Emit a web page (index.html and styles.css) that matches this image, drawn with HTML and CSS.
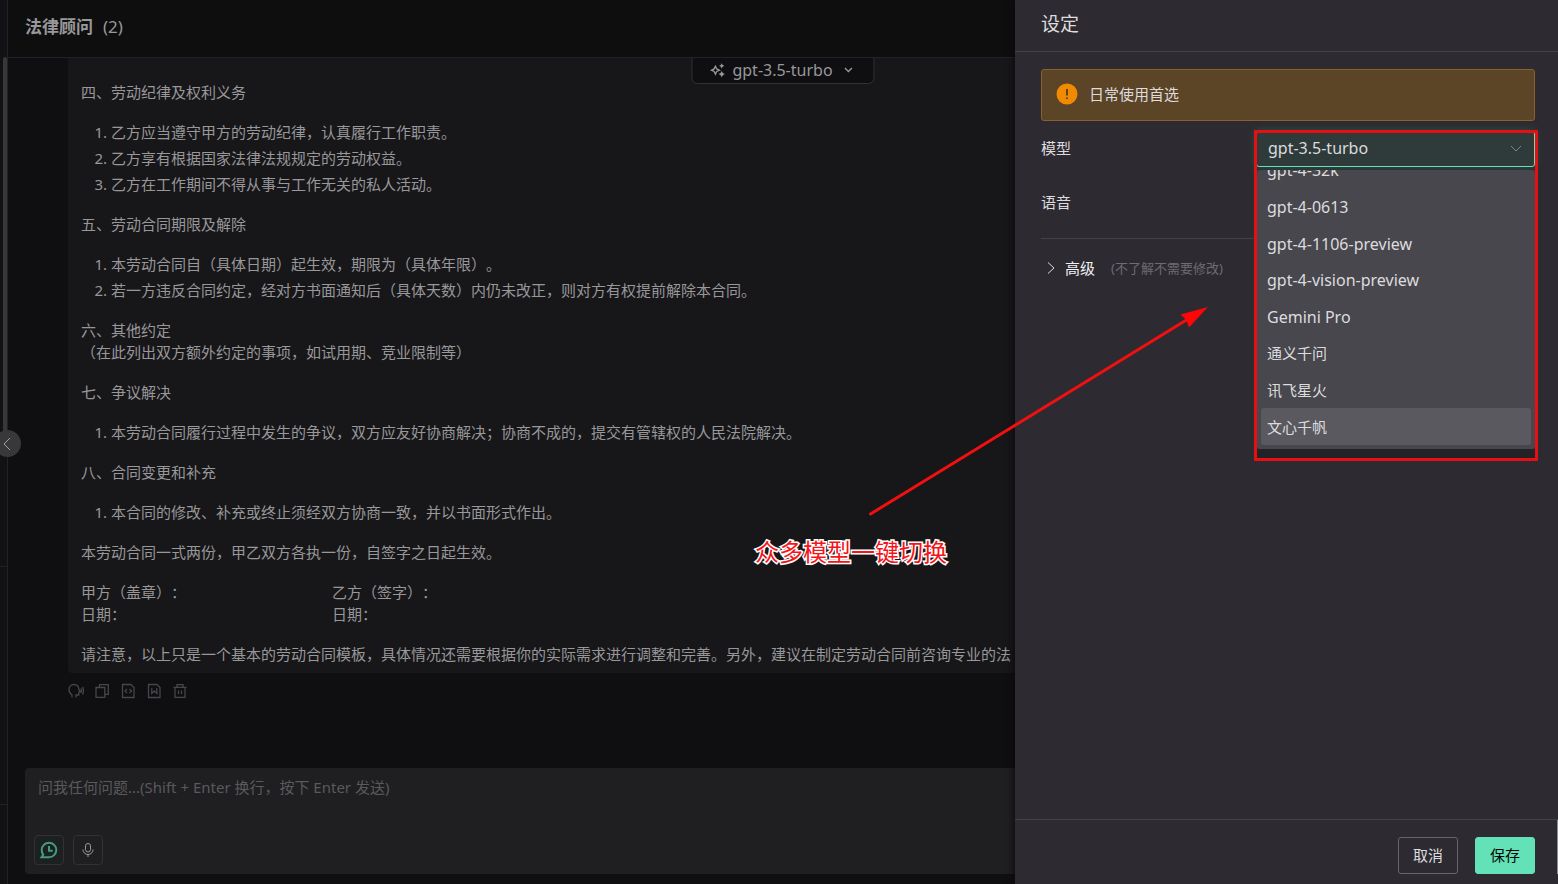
FILE: index.html
```html
<!DOCTYPE html>
<html lang="zh-CN">
<head>
<meta charset="utf-8">
<title>法律顾问</title>
<link rel="stylesheet" href="styles.css">
</head>
<body>
<div class="app">
  <aside class="sidebar">
    <div class="sidebar-list"><div class="sidebar-thumb"></div></div>
    <div class="sidebar-user"></div>
    <div class="sidebar-foot"></div>
    <button class="collapse" type="button" aria-label="收起">
      <svg width="14" height="16" viewBox="0 0 14 16"><path d="M9 2 3 8l6 6"/></svg>
    </button>
  </aside>

  <main class="chat">
    <header class="chat-header">
      <h1 class="chat-title">法律顾问</h1>
      <span class="chat-count">(2)</span>
    </header>

    <section class="messages">
      <button class="model-pill" type="button">
        <svg class="icon" width="16" height="16" viewBox="0 0 16 16"><path d="M6 4.200 7.300 6.900 10 8.200 7.300 9.500 6 12.200 4.700 9.500 2 8.200 4.700 6.900Z"/><path class="solid" d="m12.300 1.200.9 1.700 1.700.9-1.700.9-.9 1.700-.9-1.700-1.700-.9 1.700-.9ZM12.300 9l1.100 2 2 1.100-2 1.100-1.100 2-1.100-2-2-1.100 2-1.100Z"/></svg>
        <span>gpt-3.5-turbo</span>
        <svg class="icon" width="10" height="10" viewBox="0 0 10 10"><path d="m1.500 3 3.500 3.500L8.500 3"/></svg>
      </button>

      <article class="bubble">
        <p>四、劳动纪律及权利义务</p>
        <ol>
          <li>乙方应当遵守甲方的劳动纪律，认真履行工作职责。</li>
          <li>乙方享有根据国家法律法规规定的劳动权益。</li>
          <li>乙方在工作期间不得从事与工作无关的私人活动。</li>
        </ol>
        <p>五、劳动合同期限及解除</p>
        <ol>
          <li>本劳动合同自（具体日期）起生效，期限为（具体年限）。</li>
          <li>若一方违反合同约定，经对方书面通知后（具体天数）内仍未改正，则对方有权提前解除本合同。</li>
        </ol>
        <p>六、其他约定<br>（在此列出双方额外约定的事项，如试用期、竞业限制等）</p>
        <p>七、争议解决</p>
        <ol>
          <li>本劳动合同履行过程中发生的争议，双方应友好协商解决；协商不成的，提交有管辖权的人民法院解决。</li>
        </ol>
        <p>八、合同变更和补充</p>
        <ol>
          <li>本合同的修改、补充或终止须经双方协商一致，并以书面形式作出。</li>
        </ol>
        <p>本劳动合同一式两份，甲乙双方各执一份，自签字之日起生效。</p>
        <div class="signatures">
          <span>甲方（盖章）：</span><span>乙方（签字）：</span>
          <span>日期：</span><span>日期：</span>
        </div>
        <p>请注意，以上只是一个基本的劳动合同模板，具体情况还需要根据你的实际需求进行调整和完善。另外，建议在制定劳动合同前咨询专业的法</p>
      </article>

      <div class="actions">
        <button type="button" aria-label="朗读"><svg class="icon" width="16" height="16" viewBox="0 0 16 16"><path d="M4 14.500V12C2 10.500 1 9 1 6.500 1 3.500 3 1.500 6 1.500s4.800 2 4.800 4.500L12 8.500l-1.200.6V12H8v2.500M12.800 5.500c.8 1.500.8 3 0 4.500M14.500 4c1.200 2.500 1.200 5 0 7.500"/></svg></button>
        <button type="button" aria-label="复制"><svg class="icon" width="16" height="16" viewBox="0 0 16 16"><path d="M5.500 4.500V1.700h8.800v9.600H11M2 4.500h8.800v9.800H2Z"/></svg></button>
        <button type="button" aria-label="导出代码"><svg class="icon" width="16" height="16" viewBox="0 0 16 16"><path d="M2.500 1.500h8.500l3 3v10H2.500ZM7 6 5 8l2 2M9.500 6l2 2-2 2"/></svg></button>
        <button type="button" aria-label="导出文档"><svg class="icon" width="16" height="16" viewBox="0 0 16 16"><path d="M2.500 1.500h8.500l3 3v10H2.500ZM5.800 5v5.500l2.500-2.500 2.500 2.500V5"/></svg></button>
        <button type="button" aria-label="删除"><svg class="icon" width="16" height="16" viewBox="0 0 16 16"><path d="M1.500 4.300h13M5 4V1.700h6V4M3 4.500v9.800h10V4.500M6.500 7.500v3.500M9.500 7.500v3.500"/></svg></button>
      </div>
    </section>

    <form class="composer">
      <textarea class="composer-text" aria-label="消息" placeholder="问我任何问题...(Shift + Enter 换行，按下 Enter 发送)"></textarea>
      <div class="composer-tools">
        <button class="tool tool-active" type="button" aria-label="上下文"><svg width="20" height="20" viewBox="0 0 20 20"><path d="M2.500 17.300H10A7.300 7.300 0 1 0 2.700 10c0 2 .6 3.500 1.500 4.800ZM10 6v4.700h3.700"/></svg></button>
        <button class="tool" type="button" aria-label="语音输入"><svg width="20" height="20" viewBox="0 0 20 20"><rect x="7.500" y="3.500" width="5" height="8.500" rx="2.500"/><path d="M5 9.500c0 3 2.200 5 5 5s5-2 5-5M10 14.500V17"/></svg></button>
      </div>
    </form>
  </main>

  <aside class="drawer">
    <header class="drawer-header"><h2>设定</h2></header>
    <div class="drawer-body">
      <div class="alert" role="alert">
        <svg width="22" height="22" viewBox="0 0 22 22"><circle cx="11" cy="11" r="10.500"/><path d="M11 6v6.500M11 14.500v1.500"/></svg>
        <span>日常使用首选</span>
      </div>
      <div class="row">
        <label for="model">模型</label>
        <div class="select">
          <select id="model"><option>gpt-3.5-turbo</option></select>
          <svg class="select-arrow" width="12" height="12" viewBox="0 0 12 12"><path d="m1 3 5 5 5-5"/></svg>
          <div class="menu">
            <ul class="menu-list" role="listbox" aria-label="模型">
              <li role="option">gpt-4-32k</li>
              <li role="option">gpt-4-0613</li>
              <li role="option">gpt-4-1106-preview</li>
              <li role="option">gpt-4-vision-preview</li>
              <li role="option">Gemini Pro</li>
              <li role="option" class="cjk">通义千问</li>
              <li role="option" class="cjk">讯飞星火</li>
              <li role="option" class="cjk hovered">文心千帆</li>
            </ul>
          </div>
          <div class="highlight"></div>
        </div>
      </div>
      <div class="row row-voice"><span>语音</span></div>
      <button class="advanced" type="button">
        <svg width="12" height="14" viewBox="0 0 12 14"><path d="m2 1.500 6 5.500-6 5.500"/></svg>
        <span>高级</span>
        <small>(不了解不需要修改)</small>
      </button>
    </div>
    <footer class="drawer-footer">
      <button class="btn" type="button">取消</button>
      <button class="btn btn-primary" type="button">保存</button>
      <div class="footer-thumb"></div>
    </footer>
  </aside>

  <svg class="arrow" width="342" height="214" viewBox="868 304 342 214"><path class="shaft" d="M870.500 514 1188 319"/><path class="head" d="m1208 307-27.500 7.500 5.500 5 3 8Z"/></svg>
  <div class="caption">众多模型一键切换</div>
</div>
</body>
</html>
```

FILE: styles.css
```css
* { box-sizing: border-box; }

body {
  margin: 0;
  background: #0f0e11;
  color: #98989a;
  font: 15px/22px "Noto Sans", "Noto Sans CJK SC", sans-serif;
  text-spacing-trim: space-all;
}

button, textarea, select {
  font: inherit;
  color: inherit;
  margin: 0;
  padding: 0;
  border: 0;
  background: none;
}

h1, h2, p, ol, ul { margin: 0; padding: 0; }

svg {
  display: block;
  flex: none;
  fill: none;
  stroke: currentColor;
}

.icon { stroke-width: 1.300; }
.icon .solid { fill: currentColor; stroke: none; }

.app {
  position: relative;
  display: flex;
  height: 100vh;
  overflow: hidden;
}

/* Sidebar edge */
.sidebar {
  position: relative;
  flex: none;
  display: flex;
  flex-direction: column;
  width: 8px;
  background: #121114;
  border-right: 1px solid #222124;
}

.sidebar-list { flex: 1; padding: 57px 0 0 3px; }
.sidebar-thumb { height: 75%; border-radius: 3px; background: #38383a; }
.sidebar-user { height: 238px; border-top: 1px solid #222124; }
.sidebar-foot { height: 80px; border-top: 1px solid #222124; }

.collapse {
  position: absolute;
  top: 50%;
  left: -6px;
  display: grid;
  place-items: center;
  width: 27px;
  height: 27px;
  margin-top: -12px;
  border-radius: 50%;
  background: #38373a;
  color: #a0a0a2;
}

/* Chat */
.chat {
  flex: 1;
  min-width: 0;
  display: flex;
  flex-direction: column;
}

.chat-header {
  display: flex;
  align-items: center;
  gap: 10px;
  height: 58px;
  padding: 0 17px 4px;
  border-bottom: 1px solid #232225;
  background: #0e0e0f;
  font-size: 17px;
}

.chat-title { font-size: 17px; font-weight: 700; }

.messages {
  position: relative;
  flex: 1;
  min-height: 0;
  overflow: hidden;
  padding-left: 60px;
}

.model-pill {
  position: absolute;
  top: -1px;
  left: 50%;
  transform: translateX(-50%);
  display: flex;
  align-items: center;
  gap: 7px;
  height: 27px;
  padding: 0 20px 2px 17px;
  border: 1px solid #323135;
  border-radius: 0 0 6px 6px;
  background: #0f0e11;
  font-size: 16px;
}

.model-pill span { margin-right: 4px; }

.bubble {
  padding: 23px 13px 8px;
  border-radius: 0 0 4px 4px;
  background: #171619;
  white-space: nowrap;
}

.bubble > * + * { margin-top: 18px; }
.bubble ol { padding-left: 30px; }
.bubble li + li { margin-top: 4px; }

.signatures {
  display: grid;
  grid-template-columns: 251px 1fr;
}

.actions {
  display: flex;
  gap: 10px;
  padding-top: 10px;
  color: #47464a;
}

.composer {
  display: flex;
  flex-direction: column;
  height: 106px;
  margin: 0 0 10px 17px;
  padding: 8px 9px 9px;
  border-radius: 4px;
  background: #1f1e21;
}

.composer-text {
  flex: 1;
  padding: 0 4px;
  resize: none;
  outline: 0;
}

.composer-text::placeholder { color: #5a595c; opacity: 1; }

.composer-tools { display: flex; gap: 9px; }

.tool {
  display: grid;
  place-items: center;
  width: 30px;
  height: 30px;
  border: 1px solid #323135;
  border-radius: 4px;
}

.tool-active { color: #459b7f; stroke-width: 2; background: #1c2021; }

/* Settings drawer */
.drawer {
  position: absolute;
  top: 0;
  right: 0;
  bottom: 0;
  display: flex;
  flex-direction: column;
  width: 543px;
  background: #2d2b31;
  color: #dcdcde;
  box-shadow: 0 0 8px #08080a;
}

.drawer-header {
  height: 52px;
  padding: 13px 26px;
  border-bottom: 1px solid #424146;
}

.drawer-header h2 { font-size: 19px; font-weight: 400; }

.drawer-body { flex: 1; padding: 17px 23px 0 26px; }

.alert {
  display: flex;
  align-items: center;
  gap: 11px;
  height: 52px;
  padding: 0 14px 2px;
  border: 1px solid #8a6129;
  border-radius: 3px;
  background: #5c4427;
}

.alert svg { color: #5c4427; stroke-width: 2; }
.alert circle { fill: #f08a00; stroke: none; }

.row {
  display: grid;
  grid-template-columns: 1fr 279px;
  align-items: center;
  height: 36px;
  margin-top: 10px;
}

.row > label, .row > span { padding-bottom: 2px; }

.select { position: relative; }

.select select {
  display: block;
  width: 100%;
  height: 36px;
  padding: 0 11px 2px;
  appearance: none;
  outline: 0;
  border: 1px solid #63e2b7;
  border-radius: 3px;
  background: #2f3b3a;
  box-shadow: 0 0 8px #2f5549;
  font-size: 16px;
}

.select-arrow {
  position: absolute;
  top: 12px;
  right: 13px;
  color: #7e8586;
}

.menu {
  position: absolute;
  top: 39px;
  left: 1px;
  right: 0;
  display: flex;
  flex-direction: column;
  justify-content: flex-end;
  height: 279px;
  padding: 0 4px 4px;
  overflow: hidden;
  border-radius: 3px;
  background: #48474e;
}

.menu-list {
  flex: none;
  display: grid;
  grid-auto-rows: 1fr;
  height: 293px;
  list-style: none;
  font-size: 16px;
}

.menu-list li {
  display: flex;
  align-items: center;
  padding: 0 6px;
  border-radius: 3px;
}

.menu-list .cjk { font-size: 15px; }
.menu-list .hovered { background: #5a5960; }

.highlight {
  position: absolute;
  top: -1px;
  left: -2px;
  right: -3px;
  height: 331px;
  border: 3px solid #e60f12;
  pointer-events: none;
}

.highlight::before {
  content: "";
  position: absolute;
  left: 0;
  right: 0;
  bottom: 0;
  height: 9px;
  background: #222227;
}

.row-voice {
  height: 72px;
  margin-top: 0;
  border-bottom: 1px solid #424146;
}

.advanced {
  display: flex;
  align-items: center;
  gap: 7px;
  margin-top: 18px;
  padding-left: 5px;
}

.advanced span { color: #f0f0f2; }

.advanced small {
  margin-left: 9px;
  color: #6d6c72;
  font-size: 13px;
}

.drawer-footer {
  position: relative;
  display: flex;
  justify-content: flex-end;
  gap: 17px;
  height: 65px;
  padding: 17px 23px 10px;
  border-top: 1px solid #424146;
}

.btn {
  padding: 0 14px 2px;
  border: 1px solid #66656c;
  border-radius: 3px;
}

.btn-primary {
  border-color: #63e2b7;
  background: #63e2b7;
  color: #050505;
}

.footer-thumb {
  position: absolute;
  top: 0;
  right: 0;
  width: 1px;
  height: 54px;
  background: #8e8d94;
}

/* Annotations */
.arrow {
  position: absolute;
  top: 304px;
  left: 868px;
  pointer-events: none;
}

.arrow .shaft { stroke: #f01010; stroke-width: 3; stroke-linecap: round; }
.arrow .head { fill: #ff0505; stroke: none; }

.caption {
  position: absolute;
  top: 535px;
  left: 755px;
  color: #f5141a;
  font-size: 24px;
  line-height: 34px;
  paint-order: stroke fill;
  -webkit-text-stroke: 3px #fff;
}
```
